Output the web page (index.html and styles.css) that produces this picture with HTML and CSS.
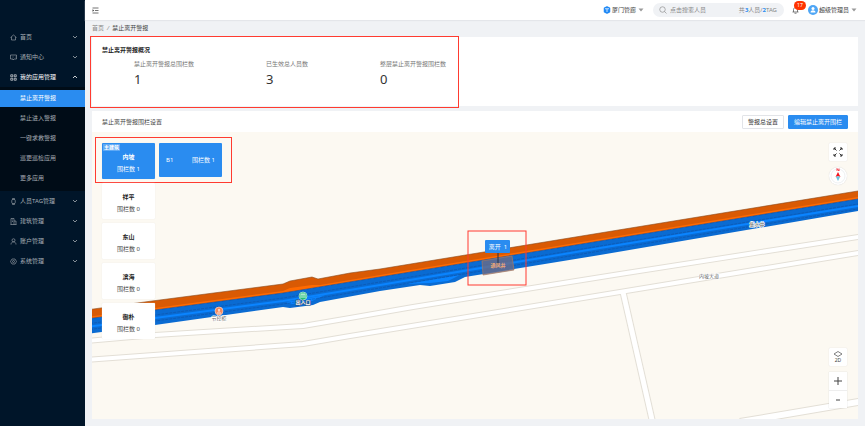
FILE: index.html
```html
<!DOCTYPE html>
<html lang="zh-CN">
<head>
  <meta charset="UTF-8">
  <meta name="viewport" content="width=device-width, initial-scale=1">
  <title>禁止离开警报</title>
  <link rel="stylesheet" href="styles.css">
</head>
<body>

<svg class="symbols" width="0" height="0" aria-hidden="true">
  <symbol id="chevron" viewBox="0 0 6 4"><path d="M1 1l2 2 2-2" fill="none" stroke="currentColor" stroke-width=".8"/></symbol>
  <symbol id="caret" viewBox="0 0 6 4"><path d="M.5.5h5L3 3.5z" fill="currentColor"/></symbol>
</svg>

<div class="layout">
  <nav class="sidebar">
    <button class="menu-item">
      <svg class="icon" viewBox="0 0 14 14"><path d="M1 7l6-5 6 5M3 6v6h8V6"/></svg>
      <span>首页</span>
      <svg class="arrow"><use href="#chevron"/></svg>
    </button>
    <button class="menu-item">
      <svg class="icon" viewBox="0 0 14 14"><path d="M1 2h12v8H8l-2 2v-2H1zM4 6h1M7 6h1M10 6h1"/></svg>
      <span>通知中心</span>
      <svg class="arrow"><use href="#chevron"/></svg>
    </button>
    <button class="menu-item open">
      <svg class="icon" viewBox="0 0 14 14"><path d="M1.500 1.500h4v4h-4zM8.500 1.500h4v4h-4zM1.500 8.500h4v4h-4zM8.500 8.500h4v4h-4z"/></svg>
      <span>我的应用管理</span>
      <svg class="arrow"><use href="#chevron"/></svg>
    </button>
    <div class="submenu">
      <a class="active" href="#">禁止离开警报</a>
      <a href="#">禁止进入警报</a>
      <a href="#">一键求救警报</a>
      <a href="#">巡更巡检应用</a>
      <a href="#">更多应用</a>
    </div>
    <button class="menu-item">
      <svg class="icon" viewBox="0 0 14 14"><path d="M5 3V1h4v2M5 11v2h4v-2"/><rect x="3.500" y="3" width="7" height="8" rx="2"/></svg>
      <span>人员TAG管理</span>
      <svg class="arrow"><use href="#chevron"/></svg>
    </button>
    <button class="menu-item">
      <svg class="icon" viewBox="0 0 14 14"><path d="M2 13V1h6v12M8 6h4v7M1 13h12M4 4h2M4 7h2"/></svg>
      <span>建筑管理</span>
      <svg class="arrow"><use href="#chevron"/></svg>
    </button>
    <button class="menu-item">
      <svg class="icon" viewBox="0 0 14 14"><circle cx="7" cy="4.500" r="3"/><path d="M2 13c0-7 10-7 10 0"/></svg>
      <span>账户管理</span>
      <svg class="arrow"><use href="#chevron"/></svg>
    </button>
    <button class="menu-item">
      <svg class="icon" viewBox="0 0 14 14"><path d="M4 2h6l3 5-3 5H4L1 7z"/><circle cx="7" cy="7" r="2"/></svg>
      <span>系统管理</span>
      <svg class="arrow"><use href="#chevron"/></svg>
    </button>
  </nav>

  <div class="main">
    <header class="topbar">
      <button class="fold" aria-label="收起菜单">
        <svg width="7" height="7" viewBox="0 0 14 14"><path d="M1 2h12M6 7h7M1 12h12" stroke="#444" stroke-width="1.500"/><path d="M1 4.500v5L4.500 7z" fill="#444"/></svg>
      </button>
      <button class="dropdown">
        <svg width="8" height="8" viewBox="0 0 16 16"><path d="M8 2l5 2.500v7L8 14l-5-2.500v-7z" fill="#2089f5" stroke="#2089f5" stroke-width="3" stroke-linejoin="round"/><path d="M4 5.500h8M8 6v6" fill="none" stroke="#fff" stroke-width="1.500"/></svg>
        <span>厦门管廊</span>
        <svg class="caret"><use href="#caret"/></svg>
      </button>
      <div class="search">
        <svg width="8" height="8" viewBox="0 0 16 16"><circle cx="7" cy="7" r="5.500" fill="none" stroke="#888" stroke-width="1.300"/><path d="M11 11l4 4" stroke="#888" stroke-width="1.300"/></svg>
        <input type="text" placeholder="点击搜索人员" aria-label="搜索人员">
        <span>共<b>3</b>人员/<b>2</b>TAG</span>
      </div>
      <button class="bell" aria-label="消息">
        <svg width="7" height="8" viewBox="0 0 14 16"><path d="M1 12h12M3 12V7c0-5 8-5 8 0v5M5 14.500h4" fill="none" stroke="#555" stroke-width="1.500"/></svg>
        <span class="badge">17</span>
      </button>
      <button class="dropdown user">
        <svg width="10" height="10" viewBox="0 0 20 20"><circle cx="10" cy="10" r="10" fill="#4fa6f5"/><circle cx="10" cy="7" r="3" fill="#fff"/><path d="M5 15c0-6 10-6 10 0z" fill="#fff"/></svg>
        <span>超级管理员</span>
        <svg class="caret"><use href="#caret"/></svg>
      </button>
    </header>

    <div class="breadcrumb"><a href="#">首页</a><i>/</i><span>禁止离开警报</span></div>

    <section class="summary">
      <h2>禁止离开警报概况</h2>
      <dl class="stats">
        <div><dt>禁止离开警报总围栏数</dt><dd>1</dd></div>
        <div><dt>已生效总人员数</dt><dd>3</dd></div>
        <div><dt>整层禁止离开警报围栏数</dt><dd>0</dd></div>
      </dl>
    </section>

    <section class="settings">
      <div class="settings-head">
        <h2>禁止离开警报围栏设置</h2>
        <button class="btn">警报总设置</button>
        <button class="btn primary">编辑禁止离开围栏</button>
      </div>

      <div class="map">
        <svg class="map-canvas" viewBox="92 132 766 287" preserveAspectRatio="xMidYMid slice">
          <!-- roads: casing first, white on top -->
          <g fill="none" stroke-linejoin="round">
            <g stroke="#e3dfd6">
              <path d="M623 292L653 424" stroke-width="7"/>
              <path d="M86 341L155 335 303 326 350 318 413 307 620 274 864 236M86 360L303 344 350 336 620 292 864 252" stroke-width="6"/>
              <path d="M740 422L864 401" stroke-width="8"/>
            </g>
            <g stroke="#fff">
              <path d="M623 292L653 424" stroke-width="5"/>
              <path d="M86 341L155 335 303 326 350 318 413 307 620 274 864 236M86 360L303 344 350 336 620 292 864 252" stroke-width="4"/>
              <path d="M740 422L864 401" stroke-width="6"/>
            </g>
          </g>

          <!-- upper gallery -->
          <path d="M86 310L152 301 283 284 290 281 312 277 318 279 350 273 380 269 600 233 864 190V198L600 241 380 277 283 293 155 310 86 319z" fill="#d95a04"/>
          <path d="M86 317L155 308 283 291 290 288 312 285 320 285 380 275 600 239 864 196V198L600 241 380 277 283 293 155 310 86 319z" fill="#ff6a00"/>
          <path d="M86 310L152 301 283 284 290 281 312 277 318 279 350 273 380 269 600 233 864 190" fill="none" stroke="#8a4a1c" stroke-width=".6"/>
          <!-- lower gallery -->
          <path d="M86 319L155 310 283 293 380 277 600 241 864 198V210L600 255 465 277 455 282 430 286 420 285 380 291 320 302 313 305 290 308 283 307 155 325 86 334z" fill="#0a6bd2"/>
          <path d="M86 327L155 318 283 301 380 285 600 248 864 205" fill="none" stroke="#0a84ff" stroke-width="2"/>
          <path d="M405 284L460 275 448 281 430 283zM286 302L325 295 312 301 292 304z" fill="#0a84ff"/>
          <g fill="none" stroke="#123f86" stroke-width=".5">
            <path d="M86 319L155 310 283 293 380 277 600 241 864 198"/>
            <g stroke-opacity=".7" stroke-dasharray="3 1">
              <path d="M86 324L155 315 283 298 380 282 600 246 864 203"/>
              <path d="M86 330L155 321 283 304 380 288 600 251 864 208"/>
            </g>
          </g>

          <!-- fence -->
          <path d="M482 261L512 256 514 270 483 275z" fill="#6c6b86" fill-opacity=".8" stroke="#a9795f" stroke-width=".7"/>
          <path d="M498 252v13" stroke="#273244" stroke-width="1"/>
          <rect x="485" y="240" width="25" height="13" rx="1" fill="#2a8cf0"/>

          <circle cx="303" cy="296" r="4" fill="#1fbf7a" stroke="#d9f5e8" stroke-width=".6"/>
          <path d="M301 298v-4h4v4M303 294v4" fill="none" stroke="#fff" stroke-width=".8"/>
          <circle cx="219" cy="311" r="4" fill="#f58a5c" stroke="#fde3d8" stroke-width=".6"/>
          <path d="M217 313h4M219 309v3M218 310h2" fill="none" stroke="#fff" stroke-width=".8"/>

          <g class="map-text" text-anchor="middle">
            <text class="tip" x="498" y="249" xml:space="preserve">离开  1</text>
            <text class="fence-name" x="498" y="267">通风井</text>
            <text class="place" x="303" y="304">出入口</text>
            <text class="poi" x="219" y="320">节控柜</text>
            <text class="poi" x="757" y="226">集水井</text>
            <text class="road-name" x="709" y="278">内坡大道</text>
          </g>
          <rect x="468" y="231" width="58" height="54" fill="none" stroke="#ff3b30"/>
        </svg>

        <div class="buildings">
          <div class="picked">
            <button class="building on"><em>主建筑</em><strong>内坡</strong><span>围栏数 1</span></button>
            <button class="floor"><span>B1</span><span>围栏数 1</span></button>
          </div>
          <button class="building"><strong>祥平</strong><span>围栏数 0</span></button>
          <button class="building"><strong>东山</strong><span>围栏数 0</span></button>
          <button class="building"><strong>滨海</strong><span>围栏数 0</span></button>
          <button class="building"><strong>御朴</strong><span>围栏数 0</span></button>
        </div>

        <div class="tools">
          <button class="tool" aria-label="全屏">
            <svg width="10" height="10" viewBox="0 0 20 20"><path d="M2 6V2h4M14 2h4v4M18 14v4h-4M6 18H2v-4M2 2l5 5M18 2l-5 5M18 18l-5-5M2 18l5-5" fill="none" stroke="#333" stroke-width="2"/></svg>
          </button>
          <button class="compass" aria-label="指北">
            <svg width="18" height="18" viewBox="0 0 18 18"><circle cx="9" cy="9" r="7" fill="none" stroke="#e2e5ea" stroke-width=".6"/><path d="M9 5l2.500 5L9 9l-2.500 1z" fill="#f5121d"/><path d="M9 14l2-4-2-1-2 1z" fill="#6fc3dd"/><path d="M8 4V1.500L10 4V1.500" fill="none" stroke="#f5222d" stroke-width=".8"/></svg>
          </button>
          <button class="tool mode">
            <svg width="10" height="6" viewBox="0 0 20 12"><path d="M10 1l8 5-8 5-8-5z" fill="none" stroke="#555" stroke-width="1.500"/></svg>
            <span>2D</span>
          </button>
          <div class="zoom">
            <button aria-label="放大"><svg width="8" height="8" viewBox="0 0 8 8"><path d="M0 4h8M4 0v8" stroke="#444"/></svg></button>
            <button aria-label="缩小"><svg width="8" height="8" viewBox="0 0 8 8"><path d="M2 4h4" stroke="#444"/></svg></button>
          </div>
        </div>
      </div>
    </section>
  </div>
</div>

</body>
</html>
```
FILE: styles.css
```css
* {
  box-sizing: border-box;
}

body {
  margin: 0;
  font-family: "Noto Sans", "Noto Sans CJK SC", sans-serif;
  font-size: 6px;
  line-height: 10px;
  color: #444;
  background: #f0f2f5;
}

button, input {
  font: inherit;
  color: inherit;
  border: none;
  background: none;
  padding: 0;
  margin: 0;
}

button {
  cursor: pointer;
}

a {
  color: inherit;
  text-decoration: none;
}

h2 {
  margin: 0;
  font-size: 6px;
}

svg {
  flex: none;
}

.symbols {
  position: absolute;
}

.layout {
  display: flex;
  min-height: 100vh;
}

/* sidebar */
.sidebar {
  flex: none;
  width: 85px;
  padding-top: 27px;
  background: #001529;
  color: #a6adb4;
}

.menu-item {
  display: flex;
  align-items: center;
  gap: 3px;
  width: 100%;
  height: 20px;
  padding: 0 7px 0 10px;
}

.menu-item span {
  flex: 1;
  text-align: left;
  white-space: nowrap;
}

.menu-item.open {
  color: #fff;
}

.menu-item.open .arrow {
  transform: rotate(180deg);
}

.icon {
  width: 7px;
  height: 7px;
  fill: none;
  stroke: currentColor;
  stroke-width: 1.2;
}

.arrow, .caret {
  width: 6px;
  height: 4px;
}

.submenu {
  display: flex;
  flex-direction: column;
  gap: 3px;
  padding: 3px 0 4px;
  background: #000c17;
}

.submenu a {
  padding-left: 20px;
  line-height: 17px;
}

.submenu .active {
  background: #2a8cf0;
  color: #fff;
}

/* top bar */
.main {
  flex: 1;
  min-width: 0;
  display: flex;
  flex-direction: column;
}

.topbar {
  display: flex;
  align-items: center;
  height: 20px;
  padding: 0 8px 0 7px;
  background: #fff;
  box-shadow: 0 1px 1px #e4e6ea;
}

.fold {
  display: flex;
  margin-right: auto;
}

.dropdown {
  display: flex;
  align-items: center;
  gap: 1px;
}

.caret {
  margin-left: 1px;
  color: #999;
}

.search {
  display: flex;
  align-items: center;
  gap: 3px;
  width: 131px;
  height: 14px;
  margin-left: 9px;
  padding: 0 7px 0 6px;
  border-radius: 7px;
  background: #f0f2f5;
  color: #888;
}

.search input {
  flex: 1;
  min-width: 0;
  outline: none;
}

.search input::placeholder {
  color: #888;
}

.search b {
  color: #2a8cf0;
}

.bell {
  position: relative;
  display: flex;
  margin-left: 8px;
}

.badge {
  position: absolute;
  left: 2px;
  top: -5px;
  width: 12px;
  border-radius: 5px;
  background: #ff3300;
  color: #fff;
  font-size: 5px;
  line-height: 9px;
}

.user {
  margin-left: 9px;
}

.breadcrumb {
  display: flex;
  gap: 3px;
  padding: 3px 7px 4px;
}

.breadcrumb a, .breadcrumb i {
  color: #888;
}

/* summary */
.summary {
  position: relative;
  height: 69px;
  margin: 0 7px;
  padding: 8px 10px;
  background: #fff;
}

.summary h2 {
  color: #222;
}

.summary::after {
  content: "";
  position: absolute;
  left: -2px;
  top: -1px;
  width: 367px;
  height: 70px;
  border: 1px solid #ff3b30;
}

.stats {
  display: flex;
  gap: 72px;
  margin: 4px 0 0;
  padding-left: 32px;
}

.stats dt {
  color: #777;
}

.stats dd {
  margin: 0;
  font-size: 13px;
  line-height: 20px;
  color: #333;
}

/* fence settings */
.settings {
  flex: 1;
  display: flex;
  flex-direction: column;
  margin: 5px 7px 7px;
  background: #fff;
}

.settings-head {
  display: flex;
  align-items: center;
  gap: 4px;
  height: 21px;
  padding: 0 10px;
}

.settings-head h2 {
  margin-right: auto;
  font-weight: normal;
}

.btn {
  height: 14px;
  padding: 0 5px;
  border: 1px solid #e2e4e8;
  border-radius: 1px;
  background: #fff;
  color: #333;
}

.btn.primary {
  border-color: #2a8cf0;
  background: #2a8cf0;
  color: #fff;
}

.map {
  position: relative;
  flex: 1;
  display: flex;
  justify-content: space-between;
  padding: 11px 11px 11px 10px;
  background: #fcf9f2;
  overflow: hidden;
}

.map-canvas {
  position: absolute;
  inset: 0;
  width: 100%;
  height: 100%;
}

.map-text {
  font-size: 5px;
  paint-order: stroke;
}

.map-text .tip {
  font-size: 6px;
  fill: #fff;
}

.map-text .fence-name {
  font-weight: bold;
  fill: #f0a878;
}

.map-text .place {
  font-weight: bold;
  fill: #fff;
  stroke: #33527a;
  stroke-width: 1px;
}

.map-text .poi,
.map-text .road-name {
  fill: #666;
  stroke: #fff;
  stroke-width: 1px;
}

.buildings {
  position: relative;
  display: flex;
  flex-direction: column;
  align-items: flex-start;
  gap: 4px;
}

.picked {
  position: relative;
  display: flex;
  align-items: flex-start;
  gap: 4px;
}

.picked::after {
  content: "";
  position: absolute;
  inset: -6px -10px -4px -7px;
  border: 1px solid #ff3b30;
  pointer-events: none;
}

.building {
  position: relative;
  display: flex;
  flex-direction: column;
  align-items: center;
  gap: 2px;
  width: 53px;
  height: 36px;
  padding-top: 9px;
  border-radius: 1px;
  background: #fff;
  box-shadow: 0 0 1px #ddd;
}

.building strong {
  color: #222;
}

.building.on, .building.on strong {
  background: #2a8cf0;
  color: #fff;
}

.building em {
  position: absolute;
  left: 1px;
  top: 1px;
  padding: 0 1px;
  background: #5fa9f5;
  font-size: 5px;
  font-style: normal;
  font-weight: bold;
  line-height: 7px;
}

.floor {
  display: flex;
  align-items: center;
  justify-content: space-between;
  width: 63px;
  height: 34px;
  padding: 0 7px;
  border-radius: 1px;
  background: #2a8cf0;
  color: #fff;
}

.tools {
  position: relative;
  display: flex;
  flex-direction: column;
  gap: 6px;
}

.tool, .compass {
  display: flex;
  flex-direction: column;
  align-items: center;
  justify-content: center;
  width: 18px;
  height: 18px;
  border-radius: 1px;
  background: #fff;
  box-shadow: 0 0 1px #ccc;
}

.compass {
  border-radius: 50%;
}

.mode {
  margin-top: auto;
  font-size: 5px;
  line-height: 6px;
}

.zoom {
  display: flex;
  flex-direction: column;
  background: #fff;
  box-shadow: 0 0 1px #ccc;
}

.zoom button {
  display: flex;
  align-items: center;
  justify-content: center;
  height: 18px;
}

.zoom button + button {
  border-top: 1px solid #eee;
}
```
